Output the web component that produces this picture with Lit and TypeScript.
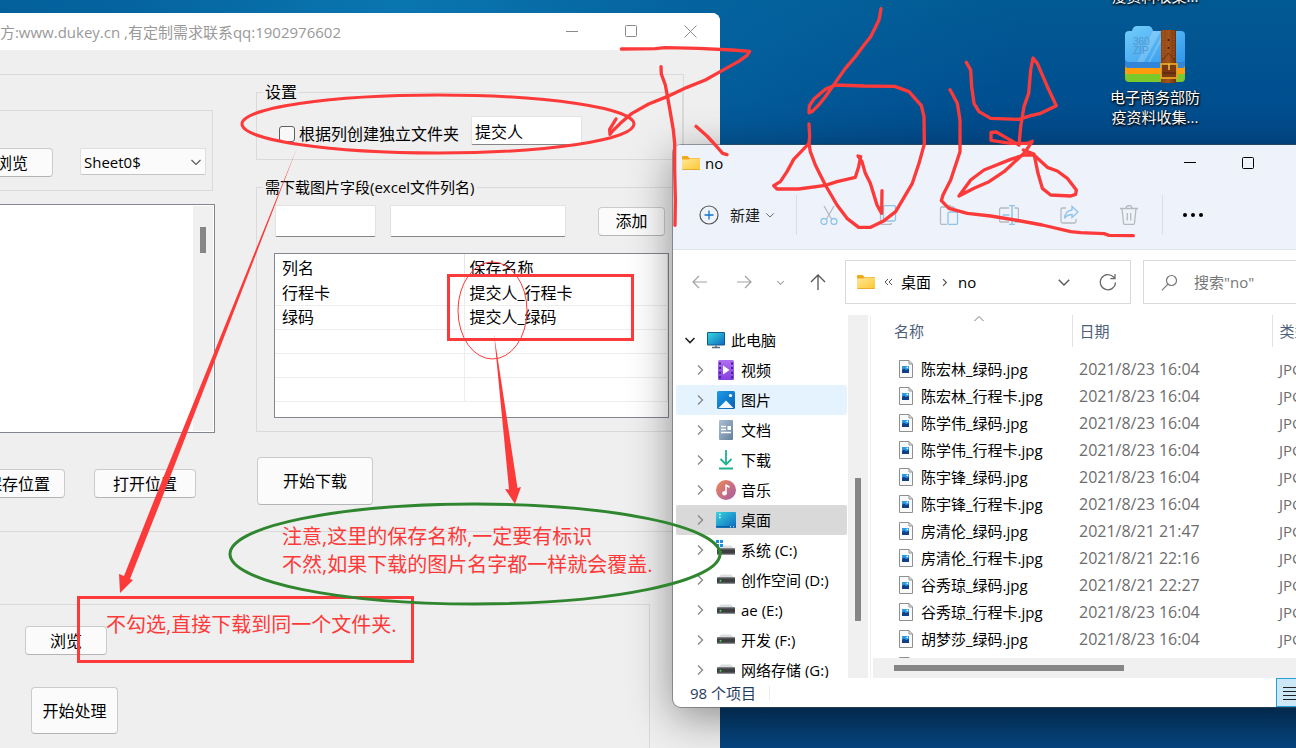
import { LitElement, html, svg, css } from "lit";
import { customElement } from "lit/decorators.js";
import { classMap } from "lit/directives/class-map.js";

const base = css`
  *, *::before, *::after { box-sizing: border-box; }
  :host { font-family: "Open Sans", "Noto Sans CJK SC", sans-serif; font-size: 15px; line-height: 20px; color: #000; }
  svg { display: block; flex: none; }
  button, input, select, textarea { font: inherit; color: inherit; margin: 0; }
  table { border-collapse: collapse; border-spacing: 0; }
  th { font-weight: 400; text-align: left; }
`;

const folder = (w: number) => html`<svg width=${w} height=${w} viewBox="0 0 18 18">
  <path d="M0 3a1 1 0 0 1 1-1h4.500l2 2H17a1 1 0 0 1 1 1v3H0z" fill="#f0a91c"/>
  <path d="M0 5.500h6.500L8 4.500h10V15a.8.800 0 0 1-.8.800H.8A.8.800 0 0 1 0 15z" fill="url(#fg)"/>
  <path d="M.3 15.500h17.400" stroke="#e0a020" stroke-width=".8"/>
  <defs><linearGradient id="fg" x1="0" y1="0" x2="1" y2="1"><stop offset="0" stop-color="#ffe69a"/><stop offset="1" stop-color="#fcc832"/></linearGradient></defs>
</svg>`;

const chev = (d: string, color: string, w = 12, sw = 1.2) => html`<svg width=${w} height=${w} viewBox="0 0 12 12" fill="none" stroke=${color} stroke-width=${sw}><path d=${d}/></svg>`;
const DOWN = "M1.500 4 6 8.500 10.500 4";
const RIGHT = "M4 1.500 8.500 6 4 10.500";
const UP = "M1.500 8 6 3.500 10.500 8";

@customElement("dukey-window")
class DukeyWindow extends LitElement {
  static styles = [base, css`
    :host { display: flex; flex-direction: column; background: #efefef; border-radius: 8px 8px 0 0; overflow: hidden; font-size: 16px; }
    .title { display: flex; align-items: center; height: 37px; background: #fff; color: #999; font-size: 15px; flex: none; }
    .name { width: 401px; display: flex; justify-content: flex-end; white-space: nowrap; }
    .controls { display: flex; margin-left: auto; }
    .controls button { width: 59px; height: 37px; border: 0; padding: 0; background: none; display: grid; place-items: center; }
    .main { display: grid; grid-template-columns: 275px 1fr; column-gap: 41px; margin: 24px 36px 0 0; padding-bottom: 26px; border: 1px solid #dadada; border-left: 0; }
    .left { padding-top: 35px; }
    .source { display: flex; align-items: flex-start; gap: 27px; height: 81px; margin-right: 2px; padding: 37px 0 0 30px; border: 1px solid #dadada; }
    .btn { background: #fbfbfb; border: 1px solid #cbcbcb; border-bottom-color: #b4b4b4; border-radius: 4px; padding: 0; height: 29px; text-align: center; }
    .source .btn { width: 82px; }
    .select { display: flex; position: relative; width: 126px; }
    .select select { appearance: none; width: 100%; height: 27px; padding: 0 24px 0 3px; background: #fbfbfb; border: 1px solid #dedede; border-bottom-color: #c4c4c4; border-radius: 2px; font-size: 15px; }
    .select svg { position: absolute; right: 4px; top: 8px; pointer-events: none; }
    .log { display: flex; height: 229px; margin-top: 13px; padding: 1px; border: 1px solid #82878f; background: #fff; }
    .log textarea { flex: 1; border: 0; resize: none; outline: 0; background: #fff; }
    .track { width: 20px; padding: 21px 0 0 7px; background: #f0f0f0; }
    .thumb { width: 6px; height: 26px; background: #868686; }
    .places { display: flex; gap: 29px; margin-top: 36px; padding-left: 31px; }
    .places .btn { width: 94px; }
    .places .btn + .btn { width: 102px; }
    fieldset { margin: 0; min-width: 0; border: 1px solid #dadada; padding: 0; }
    legend { padding: 0 2px; line-height: 20px; }
    .right { padding-top: 7px; }
    .settings { padding: 14px 22px; }
    .settings legend { margin-left: -16px; }
    .line { display: flex; align-items: flex-end; gap: 12px; }
    .check { display: flex; align-items: center; gap: 4px; line-height: 22px; white-space: nowrap; }
    .check input { appearance: none; width: 16px; height: 16px; border: 1px solid #5f5f5f; border-radius: 3px; background: #f8f8f8; }
    .text { height: 32px; width: 101px; padding: 0 3px; border: 1px solid #e2e2e2; border-bottom-color: #868686; border-radius: 2px; background: #fff; outline: 0; }
    .line .text { width: 111px; height: 29px; }
    .fields { margin-top: 17px; padding: 8px 13px 13px 18px; }
    .fields legend { font-size: 15px; margin-left: -12px; }
    .add { display: flex; align-items: center; }
    .add .text.wide { width: 176px; margin-left: 14px; }
    .add .btn { width: 67px; margin-left: 32px; }
    .grid { height: 165px; margin: 16px 0 0 -1px; border: 1px solid #82878f; background: #fff; overflow: hidden; }
    .grid table { width: 100%; table-layout: fixed; }
    .grid th { height: 27px; padding: 1px 6px 0 7px; border-right: 1px solid #e6e6e6; }
    .grid td { height: 24px; padding: 0 6px 0 7px; border-bottom: 1px solid #ededed; border-right: 1px solid #ededed; line-height: 22px; }
    .grid th:first-child { width: 189px; }
    .grid th:last-child, .grid td:last-child { padding-left: 5px; }
    .start { width: 116px; height: 48px; margin: 25px 0 0 1px; }
    .second { flex: 1; margin: 72px 70px 0 0; padding: 21px 0 0 85px; border: 1px solid #dadada; border-width: 1px 1px 0 0; display: flex; flex-direction: column; align-items: flex-start; gap: 32px; }
    .second .btn { width: 82px; }
    .second .process { width: 87px; height: 47px; margin-left: 6px; }
  `];
  render() {
    const rows = [["行程卡", "提交人_行程卡"], ["绿码", "提交人_绿码"], ["", ""], ["", ""], ["", ""]];
    return html`
      <header class="title">
        <div class="name">官方:www.dukey.cn ,有定制需求联系qq:1902976602</div>
        <div class="controls">
          <button aria-label="最小化"><svg width="13" height="13" stroke="#8a8a8a"><path d="M0 6.500h12"/></svg></button>
          <button aria-label="最大化"><svg width="13" height="13" stroke="#8a8a8a" fill="none"><rect x=".5" y=".5" width="11" height="11" rx="1"/></svg></button>
          <button aria-label="关闭"><svg width="13" height="13" stroke="#8a8a8a"><path d="M.5.500l12 12M12.500.500l-12 12"/></svg></button>
        </div>
      </header>
      <section class="main">
        <div class="left">
          <div class="source">
            <button class="btn">浏览</button>
            <div class="select"><select aria-label="工作表"><option>Sheet0$</option></select>${chev(DOWN, "#555", 12, 1.1)}</div>
          </div>
          <div class="log"><textarea aria-label="日志"></textarea><div class="track"><div class="thumb"></div></div></div>
          <div class="places"><button class="btn">保存位置</button><button class="btn">打开位置</button></div>
        </div>
        <div class="right">
          <fieldset class="settings"><legend>设置</legend>
            <div class="line">
              <label class="check"><input type="checkbox">根据列创建独立文件夹</label>
              <input class="text" aria-label="列" value="提交人">
            </div>
          </fieldset>
          <fieldset class="fields"><legend>需下载图片字段(excel文件列名)</legend>
            <div class="add"><input class="text" aria-label="列名"><input class="text wide" aria-label="保存名称"><button class="btn">添加</button></div>
            <div class="grid"><table>
              <thead><tr><th>列名</th><th>保存名称</th></tr></thead>
              <tbody>${rows.map((r) => html`<tr><td>${r[0]}</td><td>${r[1]}</td></tr>`)}</tbody>
            </table></div>
          </fieldset>
          <button class="btn start">开始下载</button>
        </div>
      </section>
      <section class="second"><button class="btn">浏览</button><button class="btn process">开始处理</button></section>`;
  }
}

const drive = svg`<path d="M2 6.500 5 3.500h10l3 3z" fill="#dcdfe1"/><rect x="1" y="6.500" width="18" height="6" rx=".5" fill="#3c3e40"/><path d="M1 12.300h18" stroke="#8b8e90" stroke-width="1.200"/><path d="M1 7h18" stroke="#6a6c6e"/><circle cx="4.500" cy="9.700" r="1" fill="#4be04b"/>`;
const icons: Record<string, unknown> = {
  pc: svg`<rect x="1" y="2" width="18" height="13.500" rx="1" fill="#155a86"/><rect x="2" y="3" width="16" height="11.500" fill="url(#pc)"/><path d="M10 15.500v2M6 17.500h8" stroke="#5b6a75" stroke-width="1.500"/><defs><linearGradient id="pc" x1="0" y1="0" x2="1" y2="1"><stop offset="0" stop-color="#35d6dc"/><stop offset="1" stop-color="#0e6dc2"/></linearGradient></defs>`,
  video: svg`<rect x="2" y="0" width="16" height="20" rx="1.500" fill="url(#vi)"/><path d="M4 2.500v16M16 2.500v16" stroke="#43208a" stroke-width="2" stroke-dasharray="2 2.600"/><path d="M7 5.500v9l6.500-4.500z" fill="#fff"/><defs><linearGradient id="vi" x1="0" y1="0" x2="0" y2="1"><stop offset="0" stop-color="#b06ef0"/><stop offset="1" stop-color="#8540e0"/></linearGradient></defs>`,
  pic: svg`<rect x="1" y="1" width="18" height="18" rx="1.500" fill="url(#pi)"/><path d="M2.500 18 10 10.500 17.500 18z" fill="#f2f7fc"/><circle cx="14.500" cy="5.500" r="1.600" fill="#fff"/><defs><linearGradient id="pi" x1="0" y1="0" x2="1" y2="1"><stop offset="0" stop-color="#1e9be8"/><stop offset="1" stop-color="#0560b5"/></linearGradient></defs>`,
  doc: svg`<rect x="3" y="0" width="14" height="20" rx="1" fill="url(#do)"/><path d="M5 6.500h5M5 9.500h5M5 12.500h10" stroke="#fff" stroke-width="1.400"/><path d="M11.500 6h3.500v4h-3.500z" fill="#fff"/><defs><linearGradient id="do" x1="0" y1="0" x2="1" y2="1"><stop offset="0" stop-color="#abc0d2"/><stop offset="1" stop-color="#647f9e"/></linearGradient></defs>`,
  down: svg`<path d="M10 0v14M4.500 9l5.500 5.500L15.500 9" fill="none" stroke="#1fb192" stroke-width="1.800"/><path d="M3 18.500h14" stroke="#1fb192" stroke-width="2"/>`,
  music: svg`<circle cx="10" cy="10" r="10" fill="url(#mu)"/><path d="M10 4.500v9" stroke="#fff" stroke-width="1.500"/><path d="M10 4.500l3.500 1.500v2L10 6.500z" fill="#fff"/><circle cx="8.500" cy="13.300" r="2.300" fill="#fff"/><defs><linearGradient id="mu" x1="0" y1="0" x2="1" y2="1"><stop offset="0" stop-color="#ef8a55"/><stop offset="1" stop-color="#a658a8"/></linearGradient></defs>`,
  desk: svg`<rect x="0" y="2" width="20" height="16" rx="1" fill="url(#de)"/><path d="M3 4.500h1.600M3 7.500h1.600" stroke="#fff" stroke-width="1.600"/><path d="M0 16.800h20" stroke="#0a5aa0" stroke-width="1.400"/><path d="M14 16.800h1.200M17 16.800h1.200" stroke="#fff"/><defs><linearGradient id="de" x1="0" y1="0" x2="1" y2="1"><stop offset="0" stop-color="#37d3e0"/><stop offset="1" stop-color="#0d68bd"/></linearGradient></defs>`,
  sys: svg`<g transform="translate(0 2)">${drive}</g><path d="M0 0h3v3H0zM4 0h3v3H4zM0 4h3v3H0zM4 4h3v3H4z" fill="#1a8fe3"/>`,
  drive: svg`<g transform="translate(0 1)">${drive}</g>`,
};

const G = "#b4bac0", B = "#8fc3ea";
const tools: [string, unknown][] = [
  ["剪切", svg`<path d="M5 1l7.500 13M15 1 7.500 14" stroke=${G}/><circle cx="5" cy="16.500" r="3" stroke=${B}/><circle cx="15" cy="16.500" r="3" stroke=${B}/>`],
  ["复制", svg`<path d="M4 4.500H3a1.500 1.500 0 0 0-1.500 1.500v12A1.500 1.500 0 0 0 3 19.500h8a1.500 1.500 0 0 0 1.500-1.500" stroke=${G}/><rect x="4.500" y=".5" width="12" height="15.500" rx="1.500" stroke=${B}/>`],
  ["粘贴", svg`<path d="M8 19.500H3A1.500 1.500 0 0 1 1.500 18V3.500A1.500 1.500 0 0 1 3 2h11a1.500 1.500 0 0 1 1.500 1.500V5M5.500 2V.5h6V2" stroke=${G}/><rect x="9" y="7" width="9.500" height="12.500" rx="1.500" stroke=${B}/>`],
  ["重命名", svg`<path d="M10 3H2A1.500 1.500 0 0 0 .5 4.500v11A1.500 1.500 0 0 0 2 17h8M15.500 3H18a1.500 1.500 0 0 1 1.500 1.500v11A1.500 1.500 0 0 1 18 17h-2.500" stroke=${G}/><path d="M10 .5h6M13 .5v19M10 19.500h6M3.500 10h7" stroke=${B} stroke-width="1.500"/>`],
  ["共享", svg`<path d="M7 3H3.500A1.500 1.500 0 0 0 2 4.500v12A1.500 1.500 0 0 0 3.500 18h12a1.500 1.500 0 0 0 1.500-1.500V14" stroke=${G}/><path d="M13 1.500 19 7l-6 5.500V9.500c-4 0-6 1.500-7.500 4 .3-4.500 3-8 7.500-8.500z" stroke=${B}/>`],
  ["删除", svg`<path d="M1 3.500h18M7 3.500a3 3 0 0 1 6 0M3 3.500l1.500 14.500a1.500 1.500 0 0 0 1.500 1.500h8a1.500 1.500 0 0 0 1.500-1.500L17 3.500M8.300 8v7.500M11.700 8v7.500" stroke=${G} stroke-width="1.300"/>`],
];

@customElement("explorer-window")
class ExplorerWindow extends LitElement {
  static styles = [base, css`
    :host { display: flex; flex-direction: column; background: #fff; border-radius: 8px; overflow: hidden; box-shadow: 0 0 0 1px rgba(70,80,90,.5), 0 10px 44px rgba(0,0,0,.42); }
    button { border: 0; background: none; padding: 0; display: grid; place-items: center; }
    .head { height: 105px; background: #eef3fb; border-bottom: 1px solid #dde3e6; display: flex; flex-direction: column; }
    .title { display: flex; align-items: center; height: 36px; padding: 0 159px 0 9px; gap: 5px; }
    .title .min { margin-left: auto; width: 58px; }
    .title .max { width: 58px; margin-left: -5px; }
    .tools { display: flex; align-items: center; height: 70px; padding-left: 26px; }
    .new { display: flex; align-items: center; gap: 11px; width: 97px; }
    .new span { color: #1c1c1c; }
    .new svg:last-child { margin-left: -6px; }
    .bar { width: 1px; height: 40px; background: #dadfe5; }
    .icons { display: flex; gap: 20px; width: 365px; padding-left: 12px; }
    .icons button { width: 40px; height: 40px; }
    .more { width: 60px; height: 40px; }
    .nav { display: flex; height: 65px; padding: 10px 0 11px 19px; align-items: center; }
    .hist { display: flex; align-items: center; width: 153px; justify-content: space-between; padding-right: 19px; }
    .hist .fwd { margin-left: 5px; }
    .addr { display: flex; align-items: center; width: 286px; height: 44px; border: 1px solid #d9d9d9; padding: 0 13px 0 11px; }
    .addr a { color: #000; text-decoration: none; }
    .addr svg, .addr a { margin-right: 9px; }
    .addr .open { margin: 0 28px 0 auto; }
    .addr .reload, .addr .reload svg, .addr .open svg { margin-right: 0; }
    .search { display: flex; flex: 1; align-items: center; gap: 16px; height: 44px; margin-left: 12px; padding-left: 17px; border: 1px solid #d9d9d9; }
    .search input { border: 0; outline: 0; flex: 1; min-width: 0; padding: 0; background: none; }
    .search input::placeholder { color: #777; opacity: 1; }
    .panes { display: flex; flex: 1; min-height: 0; }
    .tree { width: 174px; margin: 0 1px 0 0; padding: 10px 0 0 3px; list-style: none; overflow: hidden; }
    .tree li { display: flex; align-items: center; height: 30px; gap: 9px; padding-left: 18px; border-radius: 2px; white-space: nowrap; }
    .tree li > svg + svg { margin-left: 1px; margin-right: -4px; }
    .tree .root { padding-left: 8px; }
    .tree .hover { background: #e5f3ff; }
    .tree .on { background: #d9d9d9; }
    .track { width: 20px; background: #f0f0f0; padding: 163px 0 0 7px; }
    .thumb { width: 6px; height: 143px; background: #868686; }
    .files { flex: 1; min-width: 0; display: flex; flex-direction: column; margin-left: 2px; border-left: 1px solid #f0f0f0; padding-left: 2px; }
    .list { flex: 1; min-height: 0; overflow: hidden; }
    table { table-layout: fixed; width: 100%; }
    th { height: 32px; padding: 0 0 0 7px; color: #4c607a; border-right: 1px solid #e2e2e2; position: relative; }
    th:first-child { width: 199px; padding-left: 21px; }
    th:nth-child(2) { width: 200px; }
    th svg { position: absolute; left: 100px; top: -2px; }
    thead::after { content: ""; display: block; height: 8px; }
    td { height: 27px; padding: 0 0 0 7px; color: #6d6d6d; white-space: nowrap; }
    td.date { font-size: 16px; }
    .file { display: flex; align-items: center; gap: 8px; height: 27px; padding-left: 19px; color: #000; }
    .hbar { height: 20px; background: #f0f0f0; padding: 7px 0 0 21px; }
    .hthumb { width: 230px; height: 6px; background: #868686; }
    .status { display: flex; align-items: center; height: 29px; padding-left: 17px; color: #1f3a5f; }
    .status .bar { height: 14px; margin-left: 13px; background: #ececec; }
    .view { width: 32px; height: 29px; margin-left: auto; margin-right: 128px; background: #cce8f6; border: 1px solid #26a0da; }
  `];
  render() {
    const tree: [string, string][] = [["video", "视频"], ["pic", "图片"], ["doc", "文档"], ["down", "下载"], ["music", "音乐"], ["desk", "桌面"], ["sys", "系统 (C:)"], ["drive", "创作空间 (D:)"], ["drive", "ae (E:)"], ["drive", "开发 (F:)"], ["drive", "网络存储 (G:)"]];
    const files = [["陈宏林_绿码.jpg", "2021/8/23 16:04"], ["陈宏林_行程卡.jpg", "2021/8/23 16:04"], ["陈学伟_绿码.jpg", "2021/8/23 16:04"], ["陈学伟_行程卡.jpg", "2021/8/23 16:04"], ["陈宇锋_绿码.jpg", "2021/8/23 16:04"], ["陈宇锋_行程卡.jpg", "2021/8/23 16:04"], ["房清伦_绿码.jpg", "2021/8/21 21:47"], ["房清伦_行程卡.jpg", "2021/8/21 22:16"], ["谷秀琼_绿码.jpg", "2021/8/21 22:27"], ["谷秀琼_行程卡.jpg", "2021/8/23 16:04"], ["胡梦莎_绿码.jpg", "2021/8/23 16:04"], ["", ""]];
    const icon = (k: string) => html`<svg width="20" height="20" viewBox="0 0 20 20">${icons[k]}</svg>`;
    return html`
      <header class="head">
        <div class="title">${folder(18)}<span>no</span>
          <button class="min" aria-label="最小化"><svg width="12" height="12" stroke="#000"><path d="M0 5.500h12"/></svg></button>
          <button class="max" aria-label="最大化"><svg width="12" height="12" stroke="#000" fill="none"><rect x=".5" y=".5" width="11" height="11" rx="1"/></svg></button>
        </div>
        <div class="tools">
          <button class="new"><svg width="20" height="20" fill="none"><circle cx="10" cy="10" r="9" stroke="#555" stroke-width="1.200"/><path d="M10 5.500v9M5.500 10h9" stroke="#1473c8" stroke-width="1.300"/></svg><span>新建</span>${chev(DOWN, "#666", 10)}</button>
          <div class="bar"></div>
          <div class="icons">${tools.map(([n, g]) => html`<button aria-label=${n}><svg width="20" height="20" viewBox="0 0 20 20" fill="none" stroke-width="1.300">${g}</svg></button>`)}</div>
          <div class="bar"></div>
          <button class="more" aria-label="更多"><svg width="20" height="4"><circle cx="2" cy="2" r="2"/><circle cx="10" cy="2" r="2"/><circle cx="18" cy="2" r="2"/></svg></button>
        </div>
      </header>
      <nav class="nav">
        <div class="hist">
          <button aria-label="后退"><svg width="15" height="14" fill="none" stroke="#a2a2a2" stroke-width="1.200"><path d="M15 7H1M7 1 1 7l6 6"/></svg></button>
          <button class="fwd" aria-label="前进"><svg width="15" height="14" fill="none" stroke="#a2a2a2" stroke-width="1.200"><path d="M0 7h14M8 1l6 6-6 6"/></svg></button>
          <button aria-label="最近">${chev(DOWN, "#999", 9, 1.4)}</button>
          <button aria-label="上移"><svg width="16" height="16" fill="none" stroke="#555" stroke-width="1.300"><path d="M8 16V1M1 8l7-7 7 7"/></svg></button>
        </div>
        <div class="addr">${folder(18)}<svg width="8" height="10" fill="none" stroke="#555"><path d="M4 2 1 5l3 3M8 2 5 5l3 3"/></svg><a href="#">桌面</a>${chev(RIGHT, "#555", 9, 1.6)}<a href="#">no</a>
          <button class="open" aria-label="展开">${chev(DOWN, "#555", 14)}</button>
          <button class="reload" aria-label="刷新"><svg width="18" height="18" fill="none" stroke="#6a6a6a" stroke-width="1.300"><path d="M16.500 9.500A7.600 7.600 0 1 1 14.500 4L16 5.500M16 1v4.700h-4.700"/></svg></button>
        </div>
        <label class="search"><svg width="17" height="17" fill="none" stroke="#777" stroke-width="1.200"><circle cx="10.500" cy="6.500" r="5"/><path d="M7 10.200.8 16.400"/></svg><input aria-label="搜索" placeholder='搜索"no"'></label>
      </nav>
      <div class="panes">
        <ul class="tree">
          <li class="root">${chev(DOWN, "#222", 12, 1.6)}${icon("pc")}<span>此电脑</span></li>
          ${tree.map(([k, t]) => html`<li class=${classMap({ hover: k === "pic", on: k === "desk" })}>${chev(RIGHT, "#8a8a8a", 12, 1.4)}${icon(k)}<span>${t}</span></li>`)}
        </ul>
        <div class="track"><div class="thumb"></div></div>
        <div class="files">
          <div class="list"><table>
            <thead><tr><th>名称${chev(UP, "#777", 12, 1)}</th><th>日期</th><th>类型</th></tr></thead>
            <tbody>${files.map(([n, d]) => html`<tr><td><div class="file"><svg width="14" height="18"><path d="M.5.500h9.500l3.500 3.500v13.500H.5z" fill="#fafafa" stroke="#8f8f8f"/><path d="M10 .5V4h3.500" fill="none" stroke="#8f8f8f"/><rect x="3" y="6" width="7" height="7" fill="#2b9be8"/><path d="M3 10l2-1.500 2 1.500 3-1v4H3z" fill="#123f86"/><circle cx="8.300" cy="7.400" r=".8" fill="#fff"/></svg>${n}</div></td><td class="date">${d}</td><td>${n ? "JPG 文件" : ""}</td></tr>`)}</tbody>
          </table></div>
          <div class="hbar"><div class="hthumb"></div></div>
        </div>
      </div>
      <footer class="status"><span>98 个项目</span><div class="bar"></div><button class="view" aria-label="详细信息"><svg width="18" height="16" stroke="#222"><path d="M0 2.500h18M0 6.500h18M0 10.500h18M0 14.500h18"/></svg></button></footer>`;
  }
}

@customElement("app-root")
class AppRoot extends LitElement {
  static styles = [base, css`
    :host { display: block; position: relative; height: 100vh; overflow: hidden; background: radial-gradient(ellipse 620px 330px at 400px 0, #0a76b0 0, rgba(6,104,164,.7) 45%, rgba(0,80,143,0) 100%), linear-gradient(180deg, #025a93 0, #005090 12%, #04488a 22%, #043a6a 95%, #06457f 100%); }
    dukey-window { position: absolute; left: -60px; top: 13px; bottom: -20px; width: 780px; }
    explorer-window { position: absolute; left: 673px; top: 145px; right: -140px; height: 562px; }
    .shortcuts { position: absolute; right: 91px; top: -14px; width: 100px; display: flex; flex-direction: column; align-items: center; color: #fff; text-align: center; text-shadow: 1px 1px 2px #000, 0 1px 3px #000; }
    .shortcuts svg { margin: 20px 0 3px; }
    .ink { position: absolute; left: 0; top: 0; pointer-events: none; }
    .note { position: absolute; margin: 0; color: #fd3a3a; font-size: 20px; line-height: 28px; white-space: nowrap; }
    .same { left: 106px; top: 611px; }
    .mark { left: 282px; top: 523px; }
  `];
  render() {
    return html`
      <div class="shortcuts"><span>疫资料收集...</span>
        <svg width="62" height="58" viewBox="0 0 62 58">
          <defs><linearGradient id="zb" x1="0" y1="0" x2="1" y2="1"><stop offset="0" stop-color="#74cdfa"/><stop offset="1" stop-color="#2f97ec"/></linearGradient><linearGradient id="zs" x1="0" y1="0" x2="1" y2="0"><stop offset="0" stop-color="#8c4212"/><stop offset=".5" stop-color="#a4541c"/><stop offset="1" stop-color="#6e300a"/></linearGradient></defs>
          <rect x="1" y="38" width="60" height="18" rx="4" fill="#7cc92c"/><path d="M1 36h60v12H1z" fill="#ff9c0e"/><path d="M1 30h60v9q0 3-3 3H4q-3 0-3-3z" fill="#3285d8"/>
          <path d="M1 9q0-4 4-4h3q1-5 5-5h11q4 0 5 5h28q4 0 4 4v23q0 4-4 4H5q-4 0-4-4z" fill="url(#zb)"/>
          <path d="M29 5 13 36h7L37 5zM40 5 24 36h2L43 5z" fill="#fff" opacity=".2"/>
          <g fill="#5596cc" font-family="Liberation Sans, sans-serif" font-size="10" style="text-shadow:none"><text x="9" y="19">360</text><text x="9" y="28">ZIP</text></g>
          <rect x="37" y="4" width="15" height="53" rx="1" fill="url(#zs)"/><path d="M39 5v27M50 5v27" stroke="#c07a3c" stroke-width=".7" stroke-dasharray="1.500 1"/>
          <path d="m38 34 6.500-7 6.500 7" fill="none" stroke="#6b2f0c"/><circle cx="44.500" cy="14" r="1" fill="#3a1703"/><circle cx="44.500" cy="22" r="1" fill="#3a1703"/>
          <rect x="37" y="38" width="16" height="14" fill="#7a3910" stroke="#e0a628" stroke-width="1.800"/><path d="M45 38v6" stroke="#f0c050" stroke-width="1.500"/><path d="M38 47h14" stroke="#4f230a"/>
        </svg>
        <span>电子商务部防<br>疫资料收集...</span>
      </div>
      <dukey-window></dukey-window>
      <explorer-window></explorer-window>
      <svg class="ink" width="1296" height="748" fill="none" stroke="#fd3a3a" stroke-width="3">
        <ellipse cx="438" cy="124" rx="196" ry="29"/>
        <rect x="448.500" y="275.500" width="184" height="64"/>
        <ellipse cx="492.500" cy="310.500" rx="34.500" ry="48.500" stroke-width="1"/>
        <rect x="78.500" y="597.500" width="334" height="64"/>
        <ellipse cx="475" cy="554" rx="245" ry="50" stroke="#2f862f"/>
        <g fill="#fd3a3a" stroke="none">
          <path d="M297 148 162 498 130 579l3 1-13 13-1-19 5 2 31-78z"/>
          <path d="M494 334l23.500 154 3.500-1-6 17-10-15 4 .5z"/>
        </g>
        <g transform="translate(432 0) scale(.333333)" stroke-width="10" stroke-linecap="round" stroke-linejoin="round">
          <path d="M568 147 670 146 700 143 800 145 900 150 953 154 945 166 920 184 870 212 820 240 765 262 705 290 650 312 600 340 565 370 540 395 534 403 533 388 552 357"/>
          <path d="M687 200 688 222 700 255 712 320 724 390 728 430 728 510 730 600 729 676"/>
          <path d="M792 379 825 408 850 435 872 460 885 464"/>
          <path d="M1347 26 1341 60 1316 110 1296 135 1270 170 1240 205 1210 248 1180 290 1160 315 1140 335 1131 338 1132 318 1145 298 1180 268 1210 255 1296 258 1388 259 1431 275 1468 317 1476 350 1477 432 1461 490 1441 550 1391 635 1356 662 1316 682 1280 682 1245 655 1215 615 1180 555 1150 495 1135 455 1131 430 1133 410 1131 372"/>
          <path d="M1131 430 1085 478 1065 515 1045 545 1025 557 1035 567 1100 567 1180 556 1215 545 1270 532 1280 500 1286 470 1278 468 1290 485 1300 520 1315 550 1335 615 1349 640 1350 572"/>
        </g>
        <g transform="translate(864 0) scale(.333333)" stroke-width="10" stroke-linecap="round" stroke-linejoin="round">
          <path d="M307 187 320 210 323 260 330 310 345 335 380 355 465 358 500 347 530 340 577 317 550 260 520 190 507 174 500 210 494 280 480 320 470 380 465 435 430 415 397 396 381 397 381 421 440 430 490 430 505 424 480 460 420 515 375 545 330 565 285 588 320 540 360 510 440 478 480 465 510 465 550 502 580 513 610 535 637 570 635 583 620 588 560 585 535 565 522 520 510 462 478 450"/>
          <path d="M258 269 280 310 288 360 288 455 260 540 237 585 232 602 255 625 310 640 380 648 470 663 535 675 620 695 650 698 720 701 735 706 808 707"/>
        </g>
      </svg>
      <p class="note same">不勾选,直接下载到同一个文件夹.</p>
      <p class="note mark">注意,这里的保存名称,一定要有标识<br>不然,如果下载的图片名字都一样就会覆盖.</p>`;
  }
}
